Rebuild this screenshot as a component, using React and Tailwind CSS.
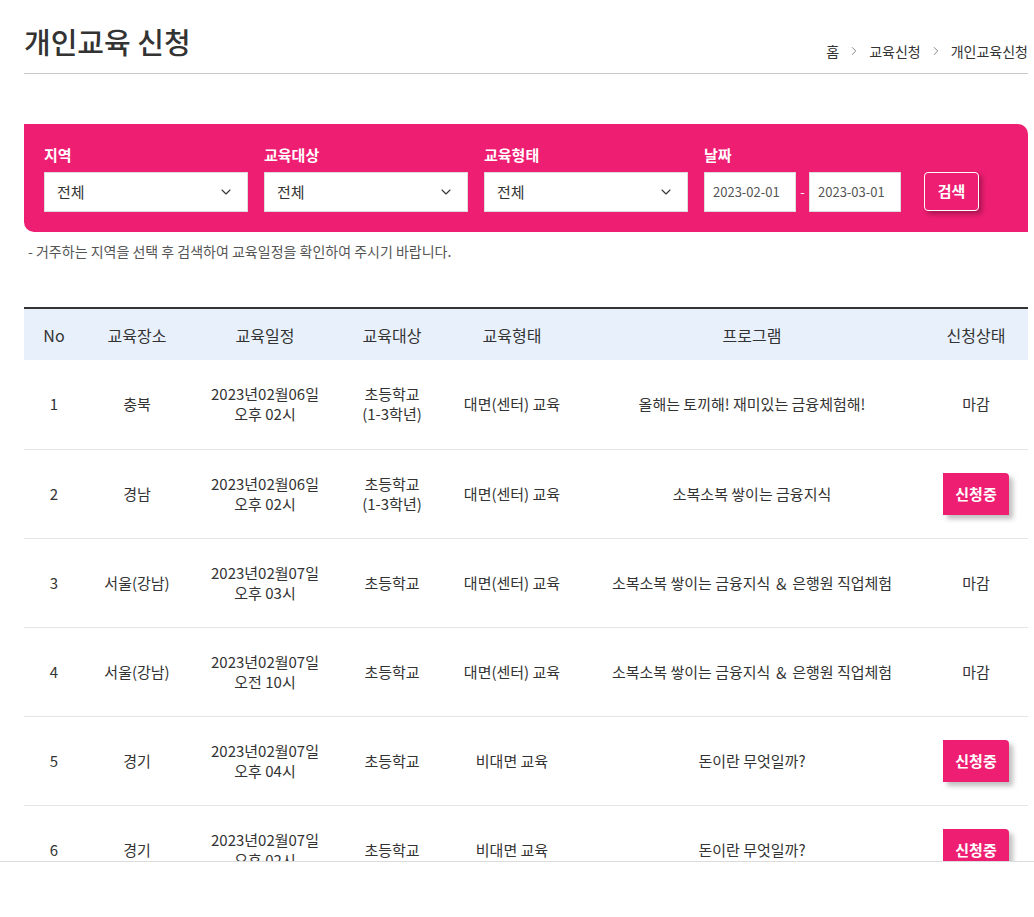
import { ChevronDown, ChevronRight } from "lucide-react";

const rows = [
  { no: 1, place: "충북", date: "2023년02월06일", time: "오후 02시", target: ["초등학교", "(1-3학년)"], type: "대면(센터) 교육", program: "올해는 토끼해! 재미있는 금융체험해!", open: false },
  { no: 2, place: "경남", date: "2023년02월06일", time: "오후 02시", target: ["초등학교", "(1-3학년)"], type: "대면(센터) 교육", program: "소복소복 쌓이는 금융지식", open: true },
  { no: 3, place: "서울(강남)", date: "2023년02월07일", time: "오후 03시", target: ["초등학교"], type: "대면(센터) 교육", program: "소복소복 쌓이는 금융지식 ＆ 은행원 직업체험", open: false },
  { no: 4, place: "서울(강남)", date: "2023년02월07일", time: "오전 10시", target: ["초등학교"], type: "대면(센터) 교육", program: "소복소복 쌓이는 금융지식 ＆ 은행원 직업체험", open: false },
  { no: 5, place: "경기", date: "2023년02월07일", time: "오후 04시", target: ["초등학교"], type: "비대면 교육", program: "돈이란 무엇일까?", open: true },
  { no: 6, place: "경기", date: "2023년02월07일", time: "오후 02시", target: ["초등학교"], type: "비대면 교육", program: "돈이란 무엇일까?", open: true },
];

const filters = [
  { label: "지역", value: "전체" },
  { label: "교육대상", value: "전체" },
  { label: "교육형태", value: "전체" },
];

function SelectBox({ value }) {
  return (
    <div className="flex h-[40px] w-[204px] items-center justify-between border border-[#dcdcdc] bg-white pl-[12px] pr-[13px] text-[15px] text-[#333]">
      <span>{value}</span>
      <ChevronDown size={16} strokeWidth={1.6} className="text-[#333]" />
    </div>
  );
}

export default function App() {
  return (
    <div
      className="h-[862px] overflow-hidden border-b border-[#dcdcdc] bg-white"
      style={{ fontFamily: '"Noto Sans CJK KR", "Noto Sans", sans-serif' }}
    >
      <div className="ml-[24px] w-[1004px]">
        {/* title */}
        <div className="flex items-end justify-between border-b border-[#c8c8c8] pt-[21px] pb-[12px]">
          <h1 className="text-[29px] leading-[40px] font-medium text-[#333]">
            개인교육 신청
          </h1>
          <div className="flex items-center gap-[8px] text-[14px] leading-[20px] text-[#333]">
            <span>홈</span>
            <ChevronRight size={14} strokeWidth={1.2} className="text-[#555]" />
            <span>교육신청</span>
            <ChevronRight size={14} strokeWidth={1.2} className="text-[#555]" />
            <span>개인교육신청</span>
          </div>
        </div>

        {/* search panel */}
        <div className="mt-[50px] flex items-end gap-[16px] rounded-tr-[10px] rounded-bl-[10px] bg-[#ee1e72] px-[20px] pt-[20px] pb-[20px]">
          {filters.map((f) => (
            <div key={f.label} className="flex flex-col">
              <span className="mb-[6px] text-[15px] leading-[22px] font-bold text-white">{f.label}</span>
              <SelectBox value={f.value} />
            </div>
          ))}
          <div className="flex flex-col">
            <span className="mb-[6px] text-[15px] leading-[22px] font-bold text-white">날짜</span>
            <div className="flex items-center">
              <div className="flex h-[40px] w-[92px] items-center border border-[#dcdcdc] bg-white pl-[8px] text-[13px] text-[#555]">
                2023-02-01
              </div>
              <span className="w-[13px] text-center text-[13px] text-white">-</span>
              <div className="flex h-[40px] w-[92px] items-center border border-[#dcdcdc] bg-white pl-[8px] text-[13px] text-[#555]">
                2023-03-01
              </div>
            </div>
          </div>
          <button className="mb-[1px] ml-[7px] flex h-[39px] w-[55px] items-center justify-center rounded-[4px] border border-white text-[15px] font-bold text-white shadow-[3px_3px_5px_rgba(0,0,0,0.3)]">
            검색
          </button>
        </div>

        <p className="mt-[9px] pl-[4px] text-[14px] leading-[20px] text-[#555]">
          - 거주하는 지역을 선택 후 검색하여 교육일정을 확인하여 주시기 바랍니다.
        </p>

        {/* table */}
        <table className="mt-[46px] w-[1004px] table-fixed border-t-2 border-[#333] text-[#333]">
          <colgroup>
            <col className="w-[60px]" />
            <col className="w-[106px]" />
            <col className="w-[150px]" />
            <col className="w-[104px]" />
            <col className="w-[136px]" />
            <col className="w-[344px]" />
            <col className="w-[104px]" />
          </colgroup>
          <thead>
            <tr className="h-[52px] bg-[#e8f0fc] text-[16px]">
              <th className="font-normal">No</th>
              <th className="font-normal">교육장소</th>
              <th className="font-normal">교육일정</th>
              <th className="font-normal">교육대상</th>
              <th className="font-normal">교육형태</th>
              <th className="font-normal">프로그램</th>
              <th className="font-normal">신청상태</th>
            </tr>
          </thead>
          <tbody className="text-[15px] leading-[20px]">
            {rows.map((r) => (
              <tr key={r.no} className="h-[89px] border-b border-[#e6e6e6] text-center">
                <td>{r.no}</td>
                <td>{r.place}</td>
                <td>
                  <div>{r.date}</div>
                  <div>{r.time}</div>
                </td>
                <td>
                  {r.target.map((t) => (
                    <div key={t}>{t}</div>
                  ))}
                </td>
                <td>{r.type}</td>
                <td>{r.program}</td>
                <td>
                  {r.open ? (
                    <span className="inline-flex h-[42px] w-[66px] items-center justify-center rounded-tr-[4px] bg-[#ee1e72] text-[15px] font-bold text-white shadow-[4px_4px_5px_rgba(0,0,0,0.25)]">
                      신청중
                    </span>
                  ) : (
                    "마감"
                  )}
                </td>
              </tr>
            ))}
          </tbody>
        </table>
      </div>
    </div>
  );
}
